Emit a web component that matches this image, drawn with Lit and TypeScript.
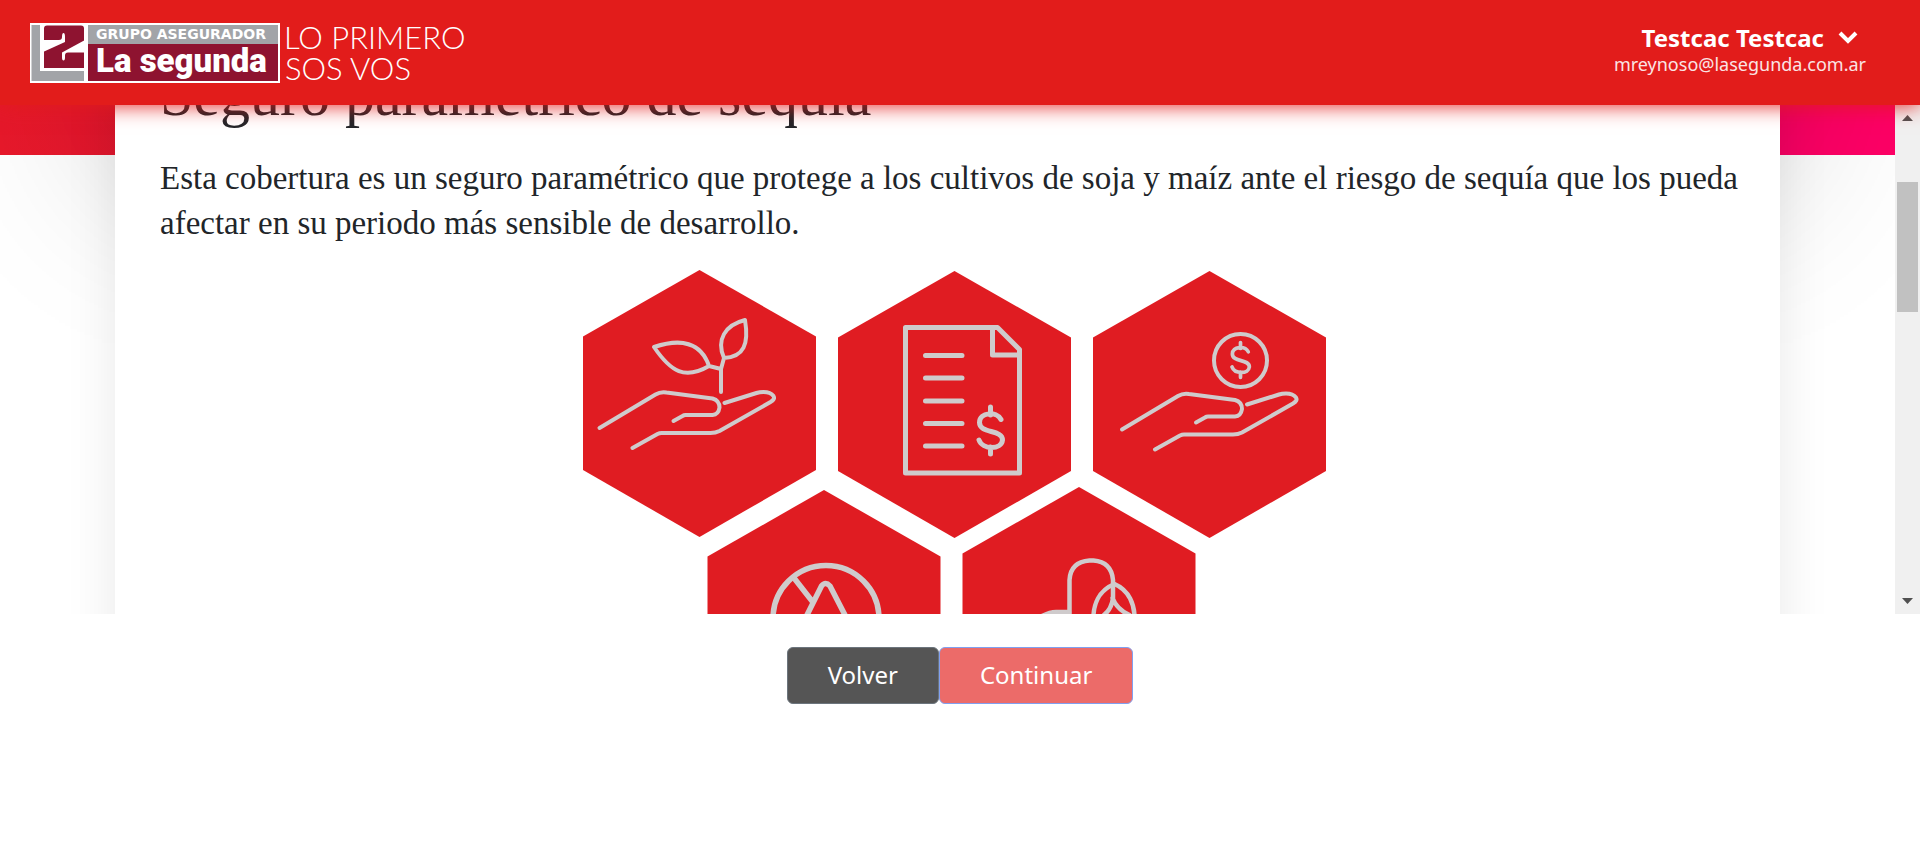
import { LitElement, html, css, svg } from "lit";
import { customElement } from "lit/decorators.js";

const hexagon = (cx: number, top: number) => svg`
  <path class="hex" d="M${cx} ${top}l116.500 66.500v133.500l-116.500 67l-116.500-67v-133.500z" />`;

const hand = svg`
  <path d="M0 0l56-33.500q5-3 11-2l46 6q7 2 7 9q-1 7-7 7.500h-27q-1.500 0-3 1l-9 5" />
  <path d="M33 20l25-14q2-1 4-1h49q5 0 9-2l51-29q5-3 3-6q-3-4-10-4q-4 0-7 1l-32 10" />`;

const dollar = svg`
  <path d="M10.500-12.500C6-21-11-20-11-9.500C-11 2 12-3 12 8C11 18-8 18-11.500 8M0-25v8M0 15v7" />`;

@customElement("app-header")
class AppHeader extends LitElement {
  static styles = css`
    :host {
      display: flex;
      align-items: center;
      justify-content: space-between;
      height: 105px;
      box-sizing: border-box;
      padding: 0 54px 0 30px;
      background: #e21c1b;
      box-shadow: 0 0 20px #e21c1b;
      color: #fff;
      font-family: "Noto Sans", sans-serif;
      position: relative;
      z-index: 2;
    }
    .logo { display: block; }
    .group { font: 700 14px "DejaVu Sans", sans-serif; fill: #fff; }
    .brand { font: 900 33px Roboto, sans-serif; fill: #fff; }
    .motto { font: 300 31px Lato, sans-serif; fill: #fff; }
    .user {
      display: flex;
      flex-direction: column;
      align-items: flex-end;
      padding-bottom: 6px;
    }
    .name {
      display: flex;
      align-items: center;
      gap: 14px;
      margin-right: 8px;
      padding: 0;
      border: 0;
      background: none;
      color: inherit;
      font: 700 24px/28px "Noto Sans", sans-serif;
    }
    .mail { font-size: 18px; line-height: 24px; color: #fbe4e4; }
  `;
  render() {
    return html`
      <svg class="logo" width="460" height="62" viewBox="30 22 460 62" role="img" aria-label="La Segunda">
        <rect x="30" y="23" width="250" height="60" fill="#fff" />
        <path d="M31.500 25h8.500v46h44v10h-52.500z" fill="#a2a4a8" />
        <path d="M47 25.500h34q3 0 3 3v39.500h-40v-39.500q0-3 3-3z" fill="#8e1330" />
        <path d="M43 40h16q3 0 3-3q0-4 1.500-4t1.500 4v5L43 52z" fill="#fff" />
        <path d="M85 40v12.500H68q-3 0-3 3v2q0 3-1.500 3t-1.500-3v-5z" fill="#fff" />
        <path d="M86.500 25v56" stroke="#fff" stroke-width="3" />
        <rect x="88" y="25" width="190" height="19" fill="#a2a4a8" />
        <rect x="88" y="44" width="190" height="37" fill="#8e1330" />
        <text class="group" x="96" y="39">GRUPO ASEGURADOR</text>
        <text class="brand" x="96" y="72">La segunda</text>
        <text class="motto" x="284" y="49">LO PRIMERO</text>
        <text class="motto" x="285" y="80">SOS VOS</text>
      </svg>
      <div class="user">
        <button class="name" type="button">
          Testcac Testcac
          <svg width="20" height="14" viewBox="0 0 20 14" fill="none" stroke="#fff" stroke-width="4">
            <path d="M2 2l8 8l8-8" />
          </svg>
        </button>
        <span class="mail">mreynoso@lasegunda.com.ar</span>
      </div>
    `;
  }
}

@customElement("coverage-icons")
class CoverageIcons extends LitElement {
  static styles = css`
    :host { display: flex; justify-content: center; }
    svg { display: block; flex: none; }
    .hex { fill: #e01c22; }
    .lines {
      fill: none;
      stroke: #cfcbcc;
      stroke-width: 4;
      stroke-linecap: round;
      stroke-linejoin: round;
    }
  `;
  render() {
    return html`
      <svg width="760" height="500" viewBox="568 260 760 500" role="img" aria-label="Cobertura de cultivos">
        ${hexagon(699.5, 270)} ${hexagon(954.5, 271)} ${hexagon(1209.5, 271)}
        ${hexagon(824, 490)} ${hexagon(1079, 487)}
        <g class="lines">
          <g transform="translate(599.500 428)">${hand}</g>
          <path d="M721 392v-23l3-11c-8-18 1-33 21-38c4 24-1 37-21 38M721 369l-12-3c-8-24-28-28-55-19c17 25 31 33 55 19" />
          <g stroke-width="5">
            <path d="M905.500 327.500h92l22 22v123.500h-114zM992.500 328v27h27" />
            <path d="M925.500 355.500h36.500M925.500 378h36.500M925.500 401h36.500M925.500 423.500h36.500M925.500 446h36.500" />
            <g transform="translate(990.500 432)">${dollar}</g>
          </g>
          <g transform="translate(1122 429.500)">${hand}</g>
          <circle cx="1240.500" cy="360.500" r="26.500" />
          <g transform="translate(1240.500 361) scale(.74)" stroke-width="5">${dollar}</g>
          <g stroke-width="5.500">
            <circle cx="826" cy="618.500" r="53" />
            <path d="M794 578l18 23M806 617l15.500-31q4-5 8.500 0l16 31" />
          </g>
          <g stroke-width="4.500">
            <path d="M1069.500 640v-60q1-18 20-19.500h4q18 1.500 19.500 19.500v18c-1 8-4 13-9 17M1112.500 598c3 8 8 13 17 17" />
            <path d="M1042 616q8-4 14-4h13M1093.500 622c-1-18 6-32 21-38c14 6 21 20 20 38" />
          </g>
        </g>
      </svg>
    `;
  }
}

@customElement("app-root")
class AppRoot extends LitElement {
  static styles = css`
    :host {
      display: flex;
      flex-direction: column;
      min-height: 100vh;
      background: #fff;
      overflow: hidden;
    }
    .viewport {
      display: flex;
      height: 60vh;
      overflow: hidden;
    }
    .page {
      flex: 1;
      min-width: 0;
      padding: 0 115px;
      background: linear-gradient(90deg, #e8192b, #ff0066 94%) 0 0 / 100% 50px no-repeat;
    }
    .card {
      padding: 0 36px;
      background: #fff;
      box-shadow: 0 0 50px rgba(0, 0, 0, 0.09), 0 -580px 180px rgba(0, 0, 0, 0.2);
      color: #212529;
      font-family: "Liberation Serif", serif;
    }
    h1 {
      margin: -41px 0 0;
      padding: 0 9px 30px;
      font-size: 60px;
      line-height: 62px;
      font-weight: 400;
    }
    p {
      margin: 0 0 14px;
      padding-left: 9px;
      font-size: 33px;
      line-height: 45px;
    }
    .scrollbar {
      display: flex;
      flex-direction: column;
      width: 25px;
      background: #f0f0f0;
    }
    .arrow { display: block; margin: 7px; }
    .thumb { height: 130px; margin: 52px 2px auto; background: #c1c1c1; }
    .actions {
      display: flex;
      justify-content: center;
      padding-top: 33px;
    }
    .btn {
      height: 57px;
      box-sizing: border-box;
      padding: 0 40px 1px;
      border: 1px solid #6c757d;
      border-radius: 6px;
      background: #555;
      color: #fff;
      font: 400 24px/36px "Noto Sans", sans-serif;
    }
    .primary { background: #ec6b69; border-color: #80a0f0; }
  `;
  render() {
    return html`
      <app-header></app-header>
      <div class="viewport">
        <main class="page">
          <article class="card">
            <h1>Seguro paramétrico de sequía</h1>
            <p>Esta cobertura es un seguro paramétrico que protege a los cultivos de soja y maíz ante el riesgo de sequía que los pueda afectar en su periodo más sensible de desarrollo.</p>
            <coverage-icons></coverage-icons>
          </article>
        </main>
        <div class="scrollbar" aria-hidden="true">
          <svg class="arrow" width="11" height="11" viewBox="0 0 11 11"><path d="M0 9h11l-5.500-6z" fill="#505050" /></svg>
          <div class="thumb"></div>
          <svg class="arrow" width="11" height="11" viewBox="0 0 11 11"><path d="M0 2h11l-5.500 6z" fill="#505050" /></svg>
        </div>
      </div>
      <div class="actions">
        <button class="btn" type="button">Volver</button>
        <button class="btn primary" type="button">Continuar</button>
      </div>
    `;
  }
}
